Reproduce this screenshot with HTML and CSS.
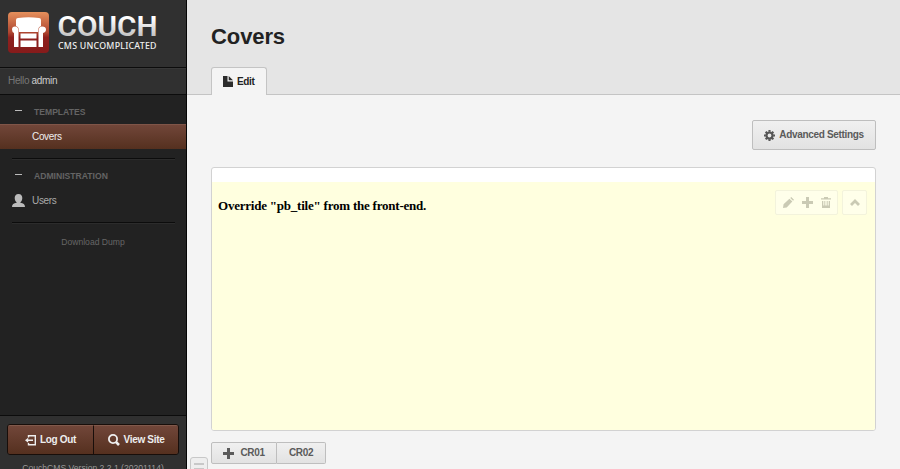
FILE: index.html
```
<!DOCTYPE html>
<html lang="en">
<head>
<meta charset="utf-8">
<title>Covers</title>
<link rel="stylesheet" href="styles.css">
</head>
<body>
<aside class="sidebar">
  <div class="logo">
    <svg width="160" height="48" viewBox="0 0 160 48">
      <defs>
        <linearGradient id="badge" x1="0" y1="0" x2="0" y2="1"><stop offset="0" stop-color="#e5905c"/><stop offset=".5" stop-color="#ae4530"/><stop offset=".62" stop-color="#8f211e"/><stop offset="1" stop-color="#861b1b"/></linearGradient>
        <linearGradient id="steel" x1="0" y1="0" x2="0" y2="1"><stop offset=".25" stop-color="#fff"/><stop offset="1" stop-color="#aaa"/></linearGradient>
      </defs>
      <rect x="8" y="4" width="41" height="41" rx="4" fill="url(#badge)"/>
      <path fill="#fff" d="M18 10q10.500-1.500 21 0q2 0 2 2v6q-3 1-3 5v1H19v-1q0-4-3-5v-6q0-2 2-2zM15 18.500q3 0 3.500 3.500v17H14V25q-2-1-2-3.500q0-3 3-3zM42 18.500q-3 0-3.500 3.500v17H43V25q3-1 3-3.500q0-3-4-3zM20.500 25.500h16v5h-16zM20.500 32.500h16V39h-16z"/>
      <text class="wordmark" x="57.500" y="28" textLength="100" lengthAdjust="spacingAndGlyphs" fill="url(#steel)">COUCH</text>
      <text class="tagline" x="58" y="40.700" textLength="98.500" lengthAdjust="spacing">CMS UNCOMPLICATED</text>
    </svg>
  </div>
  <div class="hello">Hello <a>admin</a></div>
  <nav class="nav">
    <div class="heading"><i class="dash"></i>TEMPLATES</div>
    <a class="item active">Covers</a>
    <hr class="rule">
    <div class="heading second"><i class="dash"></i>ADMINISTRATION</div>
    <a class="item users">
      <svg class="user-icon" width="13" height="13" viewBox="0 0 13 13"><path fill="#bbb" d="M6.500 0C9.200 0 10.300 1.700 10.300 4c0 1.800-.7 3.400-1.900 4.300v.5c3 .4 4.600 1.400 4.600 4.200H0c0-2.800 1.600-3.800 4.600-4.200v-.5C3.400 7.400 2.700 5.800 2.700 4c0-2.300 1.100-4 3.800-4z"/></svg>Users</a>
    <hr class="rule after-users">
    <a class="dump">Download Dump</a>
  </nav>
  <footer class="side-foot">
    <div class="actions">
      <a class="action"><svg width="11" height="11" viewBox="0 0 11 11"><path d="M3.500 2.500V.7h6.800v9.100H3.500V8" fill="none" stroke="#eee" stroke-width="1.400"/><path d="M0 5.250l3.200-2.500v1.800H8V6H3.200v1.800z" fill="#eee"/></svg>Log Out</a>
      <a class="action view"><svg width="12" height="12" viewBox="0 0 12 12"><circle cx="5" cy="5" r="4.100" fill="none" stroke="#eee" stroke-width="1.800"/><path d="M7.800 7.800l3.200 3.200" stroke="#eee" stroke-width="2.600"/></svg>View Site</a>
    </div>
    <p class="version">CouchCMS Version 2.2.1 (20201114)</p>
  </footer>
</aside>
<main class="main">
  <header class="header">
    <h1>Covers</h1>
    <a class="tab"><svg width="10" height="11" viewBox="0 0 10 11"><path fill="#2c2c2c" d="M0 0h4.500v5.500H10V11H0zM5.700 0L10 4.300H5.700z"/></svg>Edit</a>
  </header>
  <section class="content">
    <div class="toolbar">
      <a class="button settings"><svg width="11" height="11" viewBox="-6 -6 12 12"><circle r="3.300" fill="none" stroke="#555" stroke-width="2.400"/><g stroke="#555" stroke-width="2.300"><path d="M0-6v2M0 6V4M-6 0h2M6 0H4M-4.200-4.200l1.400 1.400M4.200 4.200L2.800 2.800M-4.200 4.200l1.400-1.400M4.200-4.200L2.800-2.800"/></g></svg>Advanced Settings</a>
    </div>
    <div class="panel">
      <div class="tile">
        <h3>Override "pb_tile" from the front-end.</h3>
        <div class="tools">
          <div class="toolset">
            <svg width="11" height="11" viewBox="0 0 12 12"><path fill="#cacab4" d="M0 12l.6-4L7 1.800l3.200 3.200L4 11.400zM7.900 1L9 0l3 3-1 1.100z"/></svg>
            <svg width="11" height="11" viewBox="0 0 11 11"><path fill="#cacab4" d="M4 0h3v4h4v3H7v4H4V7H0V4h4z"/></svg>
            <svg width="10" height="11" viewBox="0 0 10 11"><path fill="#cacab4" d="M0 1.200h3V0h4v1.200h3v1.300H0zM1 4h1.300v4.500h1V4h1v4.500h1.400V4h1v4.500h1V4H9v7H1z"/></svg>
          </div>
          <div class="toolset up"><svg width="10" height="7" viewBox="0 0 10 7"><path d="M1 6l4-4 4 4" fill="none" stroke="#cacab4" stroke-width="2.800"/></svg></div>
        </div>
      </div>
    </div>
    <div class="add-row">
      <a class="button add first"><svg width="11" height="11" viewBox="0 0 11 11"><path fill="#5b5b5b" d="M4 0h3v4h4v3H7v4H4V7H0V4h4z"/></svg>CR01</a><a class="button add">CR02</a>
    </div>
  </section>
  <div class="handle"><i></i><i></i></div>
</main>
</body>
</html>
```
FILE: styles.css
```
* { box-sizing: border-box; }
body {
  margin: 0;
  height: 469px;
  display: flex;
  overflow: hidden;
  font: 10px/14px "Liberation Sans", Arial, sans-serif;
  letter-spacing: -.33px;
  background: #f4f4f4;
}
svg { flex: none; display: block; letter-spacing: 0; }
.sidebar {
  width: 187px;
  height: 469px;
  flex: none;
  display: flex;
  flex-direction: column;
  background: #222;
  border-right: 1px solid #050505;
  overflow: hidden;
}
.logo {
  height: 68px;
  padding-top: 8px;
  background: #303030;
  border-bottom: 1px solid #0c0c0c;
}
.wordmark { font: 600 27.500px Roboto, sans-serif; }
.tagline { font: 500 8.800px "Noto Sans", sans-serif; fill: #eee; }
.hello {
  height: 27px;
  padding: 5px 8px 0;
  color: #777;
  background: #303030;
  border-top: 1px solid #383838;
  border-bottom: 1px solid #0c0c0c;
}
.hello a { color: #ccc; }
.nav { flex: 1; display: flex; flex-direction: column; }
.heading {
  height: 29px;
  padding-top: 4px;
  display: flex;
  align-items: center;
  color: #646464;
  font-size: 8.600px;
  letter-spacing: 0;
  font-weight: 700;
}
.heading.second { height: 28px; padding-top: 3px; }
.dash { width: 7px; height: 1px; margin: -2px 12px 0 15px; background: #bbb; }
.item {
  height: 25px;
  display: flex;
  align-items: center;
  padding-left: 32px;
  color: #aaa;
}
.item.active {
  color: #eee;
  background: linear-gradient(#714639, #55301f);
  border-top: 1px solid #7f5548;
}
.item.users { padding-left: 12px; }
.user-icon { margin-right: 7px; }
.rule {
  width: 163px;
  height: 2px;
  margin: 9px 0 0 12px;
  border: 0;
  border-top: 1px solid #0c0c0c;
  background: #2c2c2c;
}
.dump { margin-top: 11px; text-align: center; color: #666; font-size: 8.600px; letter-spacing: 0; }
.side-foot {
  height: 54px;
  padding: 8px 7px 0;
  background: #303030;
  border-top: 1px solid #0c0c0c;
}
.actions {
  display: flex;
  height: 31px;
  width: 172px;
  border: 1px solid #180e0a;
  border-radius: 3px;
  overflow: hidden;
}
.action {
  width: 86px;
  display: flex;
  align-items: center;
  justify-content: center;
  gap: 4px;
  color: #eee;
  font-weight: 700;
  background: linear-gradient(#714639, #55301f);
  border-top: 1px solid #81594b;
}
.view { border-left: 1px solid #180e0a; }
.version { margin: 6px 0 0; text-align: center; color: #999; font-size: 8.600px; letter-spacing: 0; }
.main { flex: 1; min-width: 0; position: relative; background: #f4f4f4; }
.header {
  height: 95px;
  padding: 23px 24px 0;
  background: #e5e5e5;
  border-bottom: 1px solid #c4c4c4;
}
h1 { margin: 0 0 16px; font-size: 22px; line-height: 28px; letter-spacing: -.1px; color: #222; }
.tab {
  width: 56px;
  height: 28px;
  display: flex;
  align-items: center;
  gap: 4px;
  padding-left: 11px;
  font-weight: 700;
  color: #222;
  background: #f4f4f4;
  border: 1px solid #c4c4c4;
  border-bottom: 0;
  border-radius: 3px 3px 0 0;
}
.content { padding: 25px 24px 0; }
.toolbar { display: flex; justify-content: flex-end; }
.button {
  display: flex;
  align-items: center;
  justify-content: center;
  color: #5b5b5b;
  font-weight: 700;
  background: linear-gradient(#f0f0f0, #e2e2e2);
  border: 1px solid #bebebe;
  border-radius: 2px;
}
.settings { width: 124px; height: 30px; gap: 4px; }
.panel {
  height: 264px;
  margin-top: 17px;
  padding-top: 14px;
  background: #fff;
  border: 1px solid #d2d2d2;
  border-radius: 3px;
  overflow: hidden;
}
.tile {
  height: 248px;
  display: flex;
  justify-content: space-between;
  align-items: flex-start;
  padding: 8px 8px 0 6px;
  background: #ffffdf;
}
h3 { margin: 7px 0 0; font: 700 13px/17px "Liberation Serif", "Times New Roman", serif; letter-spacing: -.22px; color: #000; }
.tools { display: flex; gap: 4px; }
.toolset {
  width: 63px;
  height: 25px;
  display: flex;
  align-items: center;
  justify-content: center;
  gap: 8px;
  background: #ffffea;
  border: 1px solid #f3f3dc;
  border-radius: 2px;
}
.up { width: 25px; }
.add-row { display: flex; margin-top: 11px; }
.add { width: 49px; height: 22px; border-left: 0; border-radius: 0 2px 2px 0; }
.first { width: 66px; gap: 6px; border-left: 1px solid #bebebe; border-radius: 2px 0 0 2px; }
.handle {
  position: absolute;
  left: 3px;
  top: 457px;
  width: 18px;
  height: 18px;
  padding: 5px 3px;
  background: #eee;
  border: 1px solid #c8c8c8;
  border-radius: 3px;
}
.handle i { display: block; height: 2px; margin-bottom: 3px; background: #c8c8c8; }
```
